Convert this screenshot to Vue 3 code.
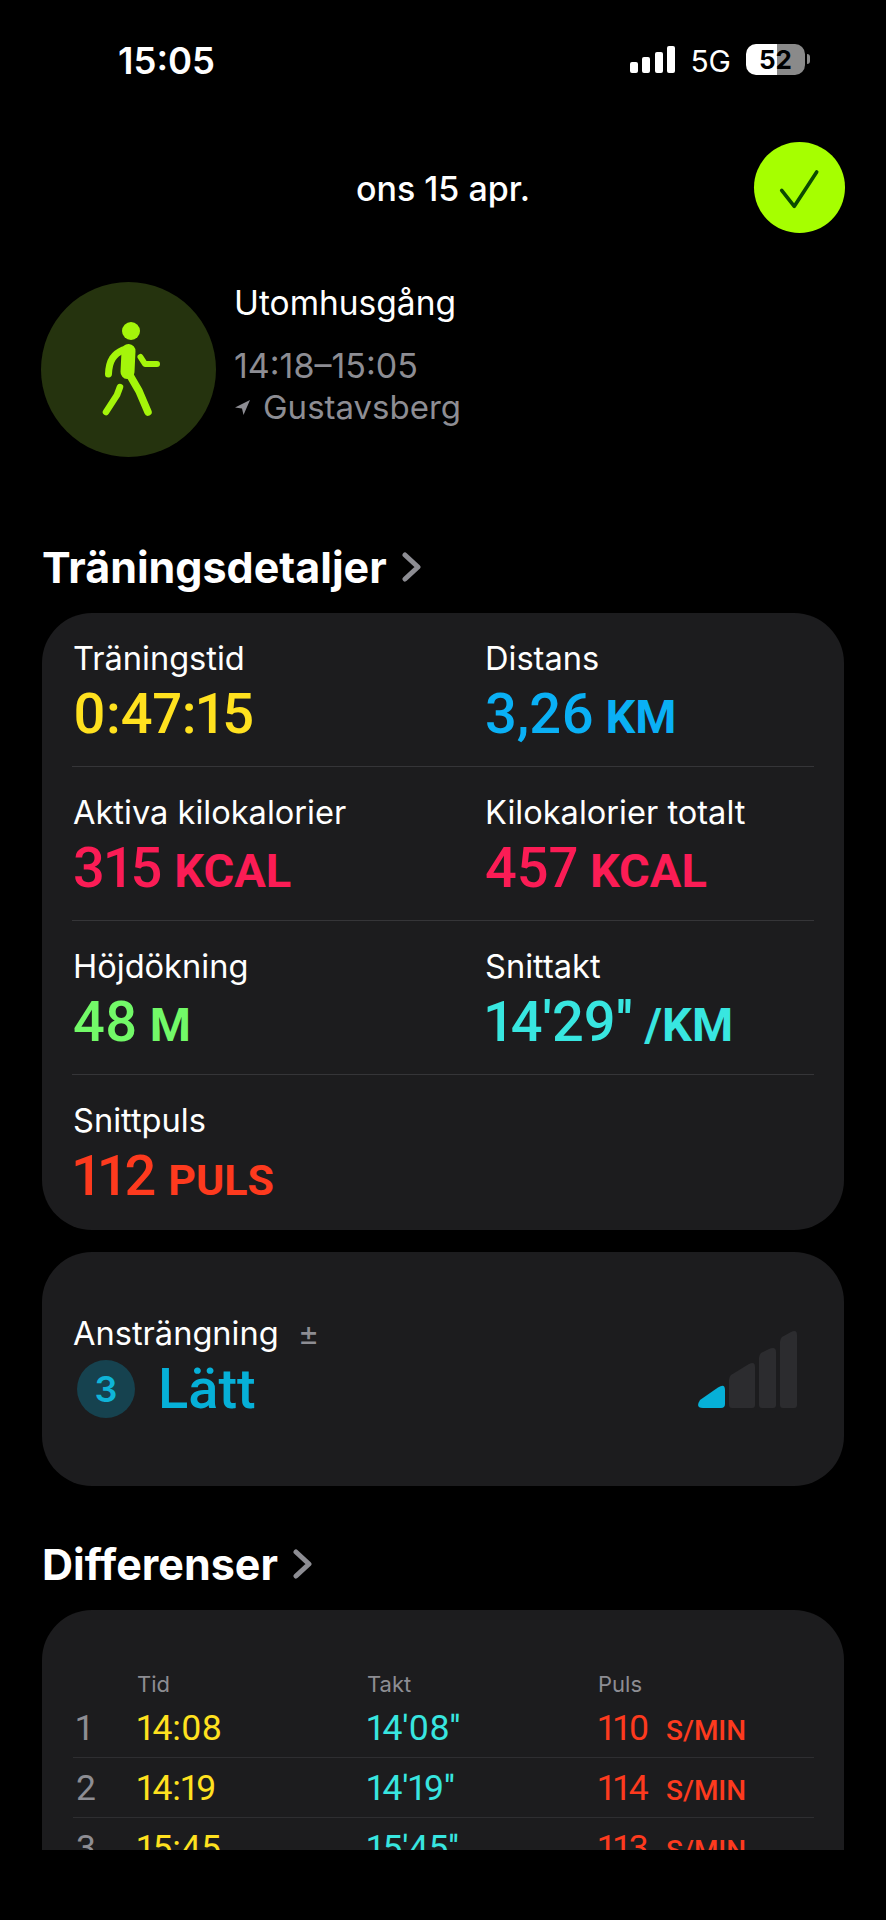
<script setup>
const stats = [
	[
		{ label: 'Träningstid', value: '0:47:15', unit: '', color: '#ffe11f' },
		{ label: 'Distans', value: '3,26', unit: 'KM', color: '#0ab0f5' },
	],
	[
		{ label: 'Aktiva kilokalorier', value: '315', unit: 'KCAL', color: '#fb1c55' },
		{ label: 'Kilokalorier totalt', value: '457', unit: 'KCAL', color: '#fb1c55' },
	],
	[
		{ label: 'Höjdökning', value: '48', unit: 'M', color: '#72f968' },
		{ label: 'Snittakt', value: "14'29''", unit: '/KM', color: '#38e6e0' },
	],
	[{ label: 'Snittpuls', value: '112', unit: 'PULS', color: '#fd3a1e' }],
];

const splits = [
	{ nr: 1, time: '14:08', pace: "14'08''", pulse: 110 },
	{ nr: 2, time: '14:19', pace: "14'19''", pulse: 114 },
	{ nr: 3, time: '15:45', pace: "15'45''", pulse: 113 },
];
</script>

<template>
	<main class="screen">
		<header class="status">
			<span class="clock">15:05</span>
			<div class="status-right">
				<div class="signal">
					<i class="b1"></i><i class="b2"></i><i class="b3"></i><i class="b4"></i>
				</div>
				<span class="net">5G</span>
				<div class="battery">
					<span>52</span>
				</div>
				<i class="battery-tip"></i>
			</div>
		</header>

		<div class="topbar">
			<span class="date">ons 15 apr.</span>
			<div class="check">
				<svg width="91" height="91" viewBox="0 0 91 91">
					<path d="M27.7 48.3 L40.3 64.3 L62.7 30" fill="none" stroke="#0b4a00" stroke-width="3.6" stroke-linecap="round" stroke-linejoin="round" />
				</svg>
			</div>
		</div>

		<section class="workout">
			<div class="activity">
				<svg width="175" height="175" viewBox="0 0 175 175">
					<g fill="none" stroke="#a4f50a" stroke-linecap="round" stroke-linejoin="round">
						<path d="M82 68 C73 72 68 78 67.5 92" stroke-width="7" />
						<path d="M87.5 69 L86.5 90" stroke-width="14" />
						<path d="M87 90 L98 109 L107 130" stroke-width="7.5" />
						<path d="M79 105 L76 113 L65 130" stroke-width="6.5" />
						<path d="M99.5 75 L104 82 L116 82" stroke-width="6" />
					</g>
					<circle cx="90" cy="49" r="9" fill="#a4f50a" />
				</svg>
			</div>
			<div class="workout-text">
				<div class="workout-title">Utomhusgång</div>
				<div class="workout-time">14:18–15:05</div>
				<div class="workout-place">
					<svg width="17" height="17" viewBox="0 0 17 17">
						<path d="M16 1 L1 8.5 L8 9.5 L9.5 16 Z" fill="#8d8d93" />
					</svg>
					<span>Gustavsberg</span>
				</div>
			</div>
		</section>

		<h2 class="heading first">
			Träningsdetaljer
			<svg width="22" height="30" viewBox="0 0 22 30">
				<path d="M4 3 L17 15 L4 27" fill="none" stroke="#8d8d93" stroke-width="5" stroke-linecap="round" stroke-linejoin="round" />
			</svg>
		</h2>

		<section class="card stats">
			<div v-for="(row, i) in stats" :key="i" class="stat-row">
				<div v-for="item in row" :key="item.label" class="stat">
					<div class="label">{{ item.label }}</div>
					<div class="value" :style="{ color: item.color }">
						{{ item.value }} <span class="unit" :class="{ narrow: item.unit === 'PULS' }">{{ item.unit }}</span>
					</div>
				</div>
			</div>
		</section>

		<section class="card effort">
			<div>
				<div class="label">Ansträngning <span class="plusminus">±</span></div>
				<div class="effort-value">
					<span class="badge">3</span>
					<span class="effort-text">Lätt</span>
				</div>
			</div>
			<svg width="99" height="78" viewBox="0 0 99 78">
				<path d="M2 70 L20 57.5 Q27 53 27 60 L27 74 Q27 78 23 78 L5 78 Q-3 78 2 70 Z" fill="#06b0d8" />
				<path d="M31 50 Q31 47 33 45 L51 34 Q57 31 57 37 L57 75 Q57 78 54 78 L34 78 Q31 78 31 75 Z" fill="#2c2c2f" />
				<path d="M61 28 Q61 25 63 23 L71 19 Q78 16 78 22 L78 75 Q78 78 75 78 L64 78 Q61 78 61 75 Z" fill="#2c2c2f" />
				<path d="M82 12 Q82 9 84 7 L93 2 Q99 -1 99 5 L99 75 Q99 78 96 78 L85 78 Q82 78 82 75 Z" fill="#2c2c2f" />
			</svg>
		</section>

		<h2 class="heading second">
			Differenser
			<svg width="22" height="30" viewBox="0 0 22 30">
				<path d="M4 3 L17 15 L4 27" fill="none" stroke="#8d8d93" stroke-width="5" stroke-linecap="round" stroke-linejoin="round" />
			</svg>
		</h2>

		<section class="card splits">
			<div class="split-head">
				<span></span>
				<span>Tid</span>
				<span>Takt</span>
				<span>Puls</span>
			</div>
			<div v-for="s in splits" :key="s.nr" class="split-row">
				<span class="nr">{{ s.nr }}</span>
				<span class="yellow">{{ s.time }}</span>
				<span class="teal">{{ s.pace }}</span>
				<span class="red pulse"><span class="pulse-nr">{{ s.pulse }}</span><span class="split-unit">S/MIN</span></span>
			</div>
		</section>
	</main>
</template>

<style>
html,
body {
	background: #000;
}
</style>

<style scoped>
.screen {
	width: 886px;
	height: 1850px;
	overflow: hidden;
	background: #000;
	color: #fff;
	font-family: Inter, "Liberation Sans", sans-serif;
	box-sizing: border-box;
}

.status {
	height: 120px;
	display: flex;
	justify-content: space-between;
	padding: 41px 76px 0 118px;
	box-sizing: border-box;
}

.clock {
	font-size: 36.5px;
	font-weight: 600;
	line-height: 40px;
}

.status-right {
	display: flex;
	align-items: flex-start;
	height: 40px;
}

.signal {
	display: flex;
	align-items: flex-end;
	gap: 4.5px;
	height: 28px;
	margin-top: 4px;
}

.signal i {
	display: block;
	width: 8px;
	background: #fff;
	border-radius: 2px;
}

.b1 { height: 11px; }
.b2 { height: 16px; }
.b3 { height: 21px; }
.b4 { height: 27px; }

.net {
	font-size: 30px;
	line-height: 40px;
	margin-left: 15px;
}

.battery {
	width: 59px;
	height: 31px;
	margin-left: 15px;
	margin-top: 3px;
	border-radius: 10px;
	background: linear-gradient(90deg, #fff 0 31px, #8a8a8a 31px);
	color: #000;
	font-size: 26px;
	font-weight: 700;
	line-height: 31px;
	text-align: center;
}

.battery-tip {
	display: block;
	width: 3px;
	height: 10px;
	margin: 13px 0 0 2px;
	border-radius: 0 3px 3px 0;
	background: #8a8a8a;
}

.topbar {
	height: 91px;
	margin-top: 22px;
	padding-top: 2px;
	box-sizing: border-box;
	display: flex;
	align-items: center;
	justify-content: center;
	position: relative;
}

.date {
	font-size: 34px;
	font-weight: 500;
}

.check {
	position: absolute;
	left: 754px;
	top: 0;
	width: 91px;
	height: 91px;
	border-radius: 50%;
	background: #a6ff00;
}

.workout {
	display: flex;
	gap: 18px;
	margin-top: 49px;
	padding-left: 41px;
}

.activity {
	width: 175px;
	height: 175px;
	border-radius: 50%;
	background: #25330e;
}

.workout-text {
	padding-top: 1px;
}

.workout-title {
	font-size: 33.5px;
	line-height: 40px;
}

.workout-time {
	margin-top: 23px;
	font-size: 34px;
	line-height: 40px;
	color: #8d8d93;
}

.workout-place {
	display: flex;
	align-items: center;
	gap: 12px;
	font-size: 33px;
	line-height: 42px;
	color: #8d8d93;
}

.heading {
	margin: 0;
	padding-left: 42px;
	display: flex;
	align-items: center;
	gap: 14px;
	font-size: 43px;
	font-weight: 700;
	line-height: 50px;
}

.heading.first {
	margin-top: 85px;
}

.heading.second {
	margin-top: 53px;
}

.card {
	width: 802px;
	margin-left: 42px;
	background: #1c1c1e;
	border-radius: 50px;
	box-sizing: border-box;
}

.stats {
	margin-top: 21px;
	height: 617px;
	padding: 0 30px;
}

.stat-row {
	display: grid;
	grid-template-columns: 412px 1fr;
	height: 154px;
	padding: 27px 0 0 1px;
	box-sizing: border-box;
	border-bottom: 1px solid #353538;
}

.stat-row:last-child {
	border-bottom: none;
}

.label {
	font-size: 32.6px;
	line-height: 36px;
	color: #fff;
}

.value {
	margin-top: 7px;
	font-family: Roboto, sans-serif;
	font-size: 56px;
	font-weight: 500;
	font-variant-numeric: proportional-nums;
	line-height: 62px;
	white-space: nowrap;
	word-spacing: -2px;
}

.unit {
	font-size: 47px;
	font-weight: 700;
}

.unit.narrow {
	font-size: 43px;
}

.effort {
	margin-top: 22px;
	height: 234px;
	padding: 63px 47px 0 31px;
	display: flex;
	justify-content: space-between;
	align-items: flex-start;
}

.effort svg {
	margin-top: 15px;
}

.plusminus {
	margin-left: 10px;
	color: #8d8d93;
	font-size: 32px;
}

.effort-value {
	display: flex;
	align-items: center;
	gap: 23px;
	margin-top: 6px;
	padding-left: 4px;
}

.badge {
	width: 58px;
	height: 58px;
	border-radius: 50%;
	background: #16424f;
	color: #0fb4d8;
	font-size: 36px;
	font-weight: 600;
	line-height: 58px;
	text-align: center;
}

.effort-text {
	font-family: Roboto, sans-serif;
	font-size: 56px;
	font-weight: 500;
	line-height: 62px;
	color: #06b0d8;
}

.splits {
	margin-top: 21px;
	height: 300px;
	padding: 60px 30px 0 31px;
}

.split-head,
.split-row {
	display: grid;
	grid-template-columns: 64px 230px 231px 1fr;
}

.split-head {
	height: 28px;
	color: #8d8d93;
	font-size: 22px;
	line-height: 28px;
}

.split-row {
	height: 59px;
	align-items: center;
	border-bottom: 1px solid #2e2e31;
	font-family: Roboto, sans-serif;
	font-size: 35.5px;
	font-variant-numeric: proportional-nums;
}

.nr {
	color: #8d8d93;
	padding-left: 3px;
}

.yellow { color: #ffe11f; }
.teal { color: #38e6e0; }
.red { color: #fd3a1e; }

.pulse {
	display: flex;
	align-items: baseline;
}

.pulse-nr {
	width: 68px;
}

.split-unit {
	font-size: 28px;
	font-weight: 500;
}
</style>
